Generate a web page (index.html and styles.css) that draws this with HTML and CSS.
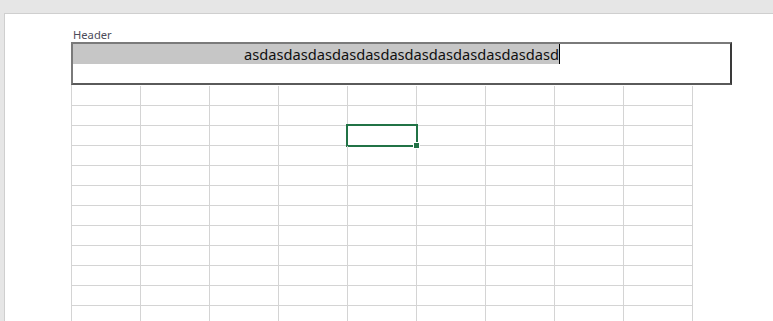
FILE: index.html
```html
<!DOCTYPE html>
<html lang="en">
<head>
    <meta charset="UTF-8">
    <title>Sheet</title>
    <link rel="stylesheet" href="styles.css">
</head>
<body>
    <div class="sheet-page">
        <div class="header-area">
            <div class="header-label">Header</div>
            <div class="header-box">
                <div class="header-line"><span class="header-sel">asdasdasdasdasdasdasdasdasdasdasdasdasd</span><span class="caret"></span></div>
            </div>
        </div>
        <div class="cell-grid" id="grid"></div>
    </div>

    <script>
        const grid = document.getElementById('grid');
        for (let r = 0; r < 12; r++) {
            for (let c = 0; c < 9; c++) {
                const cell = document.createElement('div');
                cell.className = 'cell';
                if (r === 2 && c === 4) {
                    cell.classList.add('active');
                    cell.innerHTML = '<span class="fill-handle"></span>';
                }
                grid.appendChild(cell);
            }
        }
    </script>
</body>
</html>
```

FILE: styles.css
```css
body {
    margin: 0;
    background: #e6e6e6;
    font-family: 'Noto Sans', sans-serif;
    height: 321px;
    overflow: hidden;
}

.sheet-page {
    margin: 13px 0 0 4px;
    background: #fff;
    border-top: 1px solid #cfcfcf;
    border-left: 1px solid #cfcfcf;
    height: 320px;
    padding-left: 66px;
    box-sizing: border-box;
}

.header-area {
    padding-top: 14px;
    width: 661px;
}

.header-label {
    font-size: 11.2px;
    line-height: 14px;
    color: #4c4c5a;
    padding-left: 2px;
}

.header-box {
    border: 2px solid #7a7a7a;
    border-right-color: #3a3a3a;
    border-bottom-color: #5a5a5a;
    height: 39px;
    background: #fff;
}

.header-line {
    height: 20px;
    display: flex;
    align-items: stretch;
}

.header-sel {
    background: #c6c6c6;
    padding-left: 171px;
    font-size: 14.65px;
    line-height: 20px;
    color: #111;
    white-space: nowrap;
}

.caret {
    width: 1px;
    background: #000;
}

.cell-grid {
    display: grid;
    grid-template-columns: repeat(9, 69px);
    grid-auto-rows: 20px;
    border-left: 1px solid #d4d4d4;
    width: 622px;
    padding-top: 1px;
}

.cell {
    border-right: 1px solid #d4d4d4;
    border-bottom: 1px solid #d4d4d4;
    position: relative;
}

.cell.active::after {
    content: '';
    position: absolute;
    left: -2px;
    top: -2px;
    width: 72px;
    height: 23px;
    border: 2px solid #217346;
    box-sizing: border-box;
}

.fill-handle {
    position: absolute;
    left: 65px;
    top: 16px;
    width: 5px;
    height: 5px;
    background: #217346;
    border: 1px solid #fff;
    z-index: 1;
}
```
